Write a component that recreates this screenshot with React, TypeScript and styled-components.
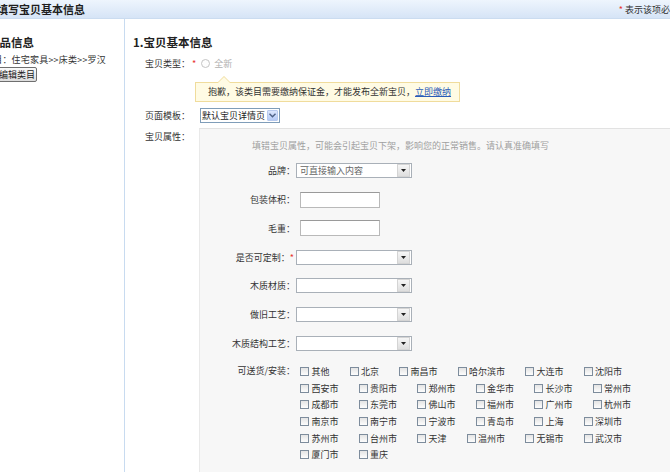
import React from 'react'
import styled, { createGlobalStyle } from 'styled-components'

const cities = [
    '其他', '北京', '南昌市', '哈尔滨市', '大连市', '沈阳市',
    '西安市', '贵阳市', '郑州市', '金华市', '长沙市', '常州市',
    '成都市', '东莞市', '佛山市', '福州市', '广州市', '杭州市',
    '南京市', '南宁市', '宁波市', '青岛市', '上海', '深圳市',
    '苏州市', '台州市', '天津', '温州市', '无锡市', '武汉市',
    '厦门市', '重庆',
]

type Prop = { label: string; kind: 'select' | 'input'; placeholder?: string; required?: boolean }

const props: Prop[] = [
    { label: '品牌：', kind: 'select', placeholder: '可直接输入内容' },
    { label: '包装体积：', kind: 'input' },
    { label: '毛重：', kind: 'input' },
    { label: '是否可定制：', kind: 'select', required: true },
    { label: '木质材质：', kind: 'select' },
    { label: '做旧工艺：', kind: 'select' },
    { label: '木质结构工艺：', kind: 'select' },
]

const DropArrow = () => (
    <ArrowButton>
        <svg width="5" height="3" viewBox="0 0 5 3">
            <path d="M0 0h5L2.5 3z" fill="#222" />
        </svg>
    </ArrowButton>
)

export default function App() {
    return (
        <>
            <GlobalStyle />
            <Page>
                <TopBar>
                    <BarTitle>填写宝贝基本信息</BarTitle>
                    <Note>
                        <Star>*</Star>表示该项必填
                    </Note>
                </TopBar>

                <Content>
                    <Sidebar>
                        <SideTitle>商品信息</SideTitle>
                        <SideCategory>类目：住宅家具&gt;&gt;床类&gt;&gt;罗汉</SideCategory>
                        <EditButton>编辑类目</EditButton>
                    </Sidebar>

                    <Main>
                        <SectionTitle>1.宝贝基本信息</SectionTitle>
                        <Form>
                            <TypeRow>
                                <span>宝贝类型：</span>
                                <Star>*</Star>
                                <Radio />
                                <Disabled>全新</Disabled>
                            </TypeRow>

                            <Tooltip>
                                抱歉，该类目需要缴纳保证金，才能发布全新宝贝，<TipLink>立即缴纳</TipLink>
                            </Tooltip>

                            <TemplateRow>
                                <FieldLabel>页面模板：</FieldLabel>
                                <TemplateSelect>
                                    <span>默认宝贝详情页</span>
                                    <XpArrow>
                                        <svg width="7" height="5" viewBox="0 0 7 5">
                                            <path d="M0.5 0.8L3.5 3.8L6.5 0.8" fill="none" stroke="#4d6185" strokeWidth="1.4" />
                                        </svg>
                                    </XpArrow>
                                </TemplateSelect>
                            </TemplateRow>

                            <AttrRow>
                                <AttrLabel>宝贝属性：</AttrLabel>
                                <Panel>
                                    <Hint>填错宝贝属性，可能会引起宝贝下架，影响您的正常销售。请认真准确填写</Hint>
                                    <PropList>
                                        {props.map((p) => (
                                            <PropRow key={p.label}>
                                                <PropLabel>
                                                    {p.label}
                                                    {p.required && <Star>*</Star>}
                                                </PropLabel>
                                                {p.kind === 'select' ? (
                                                    <PropSelect>
                                                        <Placeholder>{p.placeholder}</Placeholder>
                                                        <DropArrow />
                                                    </PropSelect>
                                                ) : (
                                                    <TextBox />
                                                )}
                                            </PropRow>
                                        ))}
                                        <CheckRow>
                                            <CheckLabel>可送货/安装：</CheckLabel>
                                            <CheckGrid>
                                                {cities.map((c) => (
                                                    <CheckItem key={c}>
                                                        <Box />
                                                        {c}
                                                    </CheckItem>
                                                ))}
                                            </CheckGrid>
                                        </CheckRow>
                                    </PropList>
                                </Panel>
                            </AttrRow>
                        </Form>
                    </Main>
                </Content>
            </Page>
        </>
    )
}

const GlobalStyle = createGlobalStyle`
    body {
        margin: 0;
        overflow: hidden;
        background: #fff;
        color: #333;
        font-family: "Noto Sans CJK SC", "Liberation Sans", sans-serif;
        font-size: 9px;
        text-spacing-trim: space-all;
    }
`

const Page = styled.div`
    width: 714px;
    height: 472px;
    margin-left: -24px;
    display: flex;
    flex-direction: column;
`

const TopBar = styled.div`
    flex: none;
    height: 18px;
    display: flex;
    align-items: center;
    justify-content: space-between;
    padding: 0 11px 0 21px;
    background: linear-gradient(#eef5fd, #d6e4f6);
    border-bottom: 1px solid #cbdcf0;
`

const BarTitle = styled.h1`
    margin: 0;
    font-size: 11px;
    font-weight: bold;
    color: #1e1e1e;
`

const Note = styled.span`
    color: #333;
`

const Star = styled.span`
    color: #e8322f;
    margin: 0 2px;
`

const Content = styled.div`
    flex: 1;
    display: flex;
    min-height: 0;
`

const Sidebar = styled.aside`
    flex: none;
    width: 149px;
    box-sizing: border-box;
    border-right: 1px solid #c8dbf0;
    padding: 16px 0 0 8px;
    display: flex;
    flex-direction: column;
    align-items: flex-start;
`

const SideTitle = styled.div`
    margin-left: 4px;
    font-size: 11.5px;
    font-weight: bold;
    line-height: 14px;
    color: #222;
`

const SideCategory = styled.div`
    margin-top: 4px;
    line-height: 14px;
    white-space: nowrap;
    letter-spacing: 0.2px;
`

const EditButton = styled.button`
    margin-left: 13px;
    height: 15px;
    padding: 0 1px;
    font: inherit;
    color: #222;
    border: 1px solid #6f6f6f;
    border-radius: 2px;
    background: linear-gradient(#fafafa, #dcdcdc);
`

const Main = styled.main`
    flex: 1;
    padding: 16px 0 0 8px;
    display: flex;
    flex-direction: column;
`

const SectionTitle = styled.h2`
    margin: 0;
    font-size: 11.5px;
    line-height: 14px;
    font-weight: bold;
    color: #222;
`

const Form = styled.div`
    flex: 1;
    margin-left: 12px;
    display: flex;
    flex-direction: column;
`

const TypeRow = styled.div`
    margin-top: 7px;
    height: 14px;
    display: flex;
    align-items: center;
`

const Radio = styled.span`
    width: 9px;
    height: 9px;
    box-sizing: border-box;
    margin: 0 4px 0 3px;
    border: 1px solid #c4c4c4;
    border-radius: 50%;
    background: #fdfdfd;
`

const Disabled = styled.span`
    color: #b0b0b0;
`

const Tooltip = styled.div`
    position: relative;
    margin: 12px 0 0 50px;
    width: 265px;
    height: 20px;
    box-sizing: border-box;
    padding-left: 12px;
    line-height: 18px;
    border: 1px solid #f0dc9c;
    background: #fffbe4;
    color: #333;
    white-space: nowrap;

    &::before,
    &::after {
        content: '';
        position: absolute;
        left: 22px;
        border: 6px solid transparent;
        border-top: 0;
    }

    &::before {
        top: -7px;
        border-bottom: 6px solid #f0dc9c;
    }

    &::after {
        top: -6px;
        border-bottom: 6px solid #fffbe4;
    }
`

const TipLink = styled.a`
    color: #2a5cb8;
    text-decoration: underline;
`

const TemplateRow = styled.div`
    margin-top: 6px;
    display: flex;
    align-items: center;
`

const FieldLabel = styled.span`
    flex: none;
    width: 55px;
`

const TemplateSelect = styled.div`
    height: 15px;
    box-sizing: border-box;
    display: flex;
    align-items: center;
    padding-left: 1px;
    border: 1px solid #7f9db9;
    background: #fff;
    color: #222;
`

const XpArrow = styled.span`
    margin: 0 1px 0 2px;
    width: 11px;
    height: 11px;
    box-sizing: border-box;
    display: flex;
    align-items: center;
    justify-content: center;
    border: 1px solid #b7c9ee;
    border-radius: 1px;
    background: linear-gradient(#dbe6fd, #b6cbf6);
`

const AttrRow = styled.div`
    flex: 1;
    margin-top: 5px;
    display: flex;
`

const AttrLabel = styled.span`
    flex: none;
    width: 54px;
    padding-top: 2px;
    line-height: 14px;
`

const Panel = styled.div`
    flex: 1;
    padding-top: 11px;
    border-top: 1px solid #e2e2e2;
    border-left: 1px solid #e9e9e9;
    background: #f7f7f7;
`

const Hint = styled.div`
    padding-left: 52px;
    line-height: 12px;
    color: #a0a0a0;
`

const PropList = styled.div`
    margin-top: 4.6px;
    display: flex;
    flex-direction: column;
`

const PropRow = styled.div`
    height: 28.7px;
    display: flex;
    align-items: center;
`

const PropLabel = styled.span`
    flex: none;
    width: 95px;
    text-align: right;
    white-space: nowrap;

    ${Star} {
        margin: 0 1px 0 0;
    }
`

const PropSelect = styled.div`
    margin-left: 1px;
    width: 116px;
    height: 15px;
    box-sizing: border-box;
    display: flex;
    align-items: center;
    border: 1px solid #a9b0b8;
    background: #fff;
`

const Placeholder = styled.span`
    flex: 1;
    padding-left: 3px;
    color: #666;
`

const ArrowButton = styled.span`
    width: 11px;
    height: 11px;
    margin-right: 1px;
    display: flex;
    align-items: center;
    justify-content: center;
    border: 1px solid #d4d4d4;
    background: linear-gradient(#f6f6f6, #dedede);
`

const TextBox = styled.span`
    margin-left: 5px;
    width: 80px;
    height: 16px;
    box-sizing: border-box;
    border: 1px solid #b9b9b9;
    border-top-color: #9a9a9a;
    background: #fff;
`

const CheckRow = styled.div`
    padding-top: 6px;
    display: flex;
    align-items: flex-start;
`

const CheckLabel = styled(PropLabel)`
    line-height: 16.6px;
`

const CheckGrid = styled.div`
    margin-left: 5px;
    width: 370px;
    display: flex;
    flex-wrap: wrap;
`

const CheckItem = styled.label`
    height: 16.6px;
    margin-right: 20px;
    display: inline-flex;
    align-items: center;
    gap: 2.5px;
    color: #333;
`

const Box = styled.span`
    width: 9px;
    height: 9px;
    box-sizing: border-box;
    border: 1px solid #7d8c9c;
    background: linear-gradient(#e4e4e4, #fdfdfd);
`
